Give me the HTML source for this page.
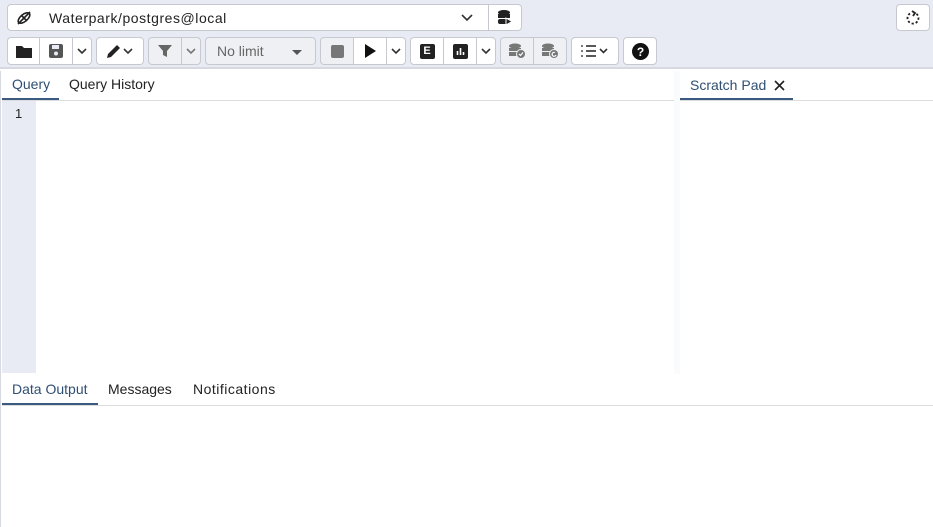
<!DOCTYPE html>
<html><head><style>
*{box-sizing:border-box;margin:0;padding:0}
body{width:933px;height:527px;background:#fff;font-family:"Liberation Sans",sans-serif;font-size:14px;color:#222;position:relative;overflow:hidden}
.top{position:absolute;left:0;top:0;width:933px;height:69px;background:#e8ebf3;border-bottom:2px solid #d6d9e0}
.b{position:absolute;background:#fff;border:1px solid #c6c9d0;display:flex;align-items:center;justify-content:center}
.abs{position:absolute}
.tab{position:absolute;font-size:14px}
</style></head><body>
<div class="top">
<div class="b" style="left:7px;top:4px;width:33px;height:27px;border-radius:4px 0 0 4px">
<svg width="18" height="18" viewBox="0 0 18 18" fill="none" stroke="#222" stroke-width="1.6"><ellipse cx="9" cy="9" rx="7" ry="3.5" transform="rotate(-40 9 9)"/><path d="M4 14l10-10M6 6l6 6M3 15l2-2M13 5l2-2"/></svg></div>
<div class="b" style="left:39px;top:4px;width:450px;height:27px;justify-content:flex-start;padding-left:10px;border-left:none;letter-spacing:0.55px">Waterpark/postgres@local
<svg class="abs" style="left:422px;top:9px" width="12" height="8" viewBox="0 0 12 8"><path d="M1 1l5 5 5-5" stroke="#333" stroke-width="1.6" fill="none"/></svg></div>
<div class="b" style="left:488px;top:4px;width:34px;height:27px;border-radius:0 4px 4px 0">
<svg width="16" height="18" viewBox="0 0 16 18"><ellipse cx="7" cy="3.5" rx="6" ry="2.5" fill="#222"/><rect x="1" y="5" width="12" height="4" fill="#222"/><rect x="1" y="10" width="12" height="5" rx="2" fill="#222"/><path d="M9 9l6 3.5-6 3.5z" fill="#222" stroke="#fff" stroke-width="1"/></svg></div>
<div class="b" style="left:896px;top:4px;width:34px;height:27px;border-radius:4px">
<svg width="16" height="16" viewBox="0 0 16 16" fill="none" stroke="#222" stroke-width="1.8" stroke-dasharray="2.2 2"><path d="M5 3.5A5.5 5.5 0 1 0 10 3"/><path d="M7 1l3 2-2 3" stroke-dasharray="none"/></svg></div>

<div class="b" style="left:7px;top:37px;width:33px;height:28px;border-radius:4px 0 0 4px"><svg width="16" height="14" viewBox="0 0 16 14"><path d="M0 2h6l2 2h8v10H0z" fill="#222"/></svg></div>
<div class="b" style="left:39px;top:37px;width:34px;height:28px"><svg width="14" height="14" viewBox="0 0 14 14"><rect width="14" height="14" rx="2" fill="#555"/><rect x="3" y="1" width="7" height="4" fill="#e8ebf3"/><circle cx="7" cy="9.5" r="2" fill="#e8ebf3"/></svg></div>
<div class="b" style="left:72px;top:37px;width:20px;height:28px;border-radius:0 4px 4px 0"><svg width="10" height="7" viewBox="0 0 10 7"><path d="M1 1l4 4 4-4" stroke="#333" stroke-width="1.6" fill="none"/></svg></div>
<div class="b" style="left:96px;top:37px;width:48px;height:28px;border-radius:4px"><svg width="30" height="16" viewBox="0 0 30 16"><path d="M2 15l1-4 9-9 3 3-9 9z" fill="#222"/><path d="M19 6l4 4 4-4" stroke="#333" stroke-width="1.6" fill="none"/></svg></div>
<div class="b" style="left:148px;top:37px;width:34px;height:28px;border-radius:4px 0 0 4px;background:#eef0f4"><svg width="14" height="14" viewBox="0 0 14 14"><path d="M0 1h14L9 7v6L5 11V7z" fill="#666"/></svg></div>
<div class="b" style="left:181px;top:37px;width:20px;height:28px;border-radius:0 4px 4px 0;background:#eef0f4"><svg width="10" height="7" viewBox="0 0 10 7"><path d="M1 1l4 4 4-4" stroke="#777" stroke-width="1.6" fill="none"/></svg></div>
<div class="b" style="left:205px;top:37px;width:111px;height:28px;border-radius:4px;background:#eef0f4;justify-content:flex-start;padding-left:11px;color:#666">No limit<svg class="abs" style="left:86px;top:12px" width="10" height="5" viewBox="0 0 10 5"><path d="M0 0h10L5 5z" fill="#555"/></svg></div>
<div class="b" style="left:320px;top:37px;width:34px;height:28px;border-radius:4px 0 0 4px;background:#eef0f4"><div style="width:13px;height:13px;background:#777;border-radius:2px"></div></div>
<div class="b" style="left:353px;top:37px;width:34px;height:28px"><svg width="12" height="14" viewBox="0 0 12 14"><path d="M1 0l11 7-11 7z" fill="#111"/></svg></div>
<div class="b" style="left:386px;top:37px;width:20px;height:28px;border-radius:0 4px 4px 0"><svg width="10" height="7" viewBox="0 0 10 7"><path d="M1 1l4 4 4-4" stroke="#333" stroke-width="1.6" fill="none"/></svg></div>
<div class="b" style="left:410px;top:37px;width:34px;height:28px;border-radius:4px 0 0 4px"><div style="width:15px;height:15px;background:#222;border-radius:2px;color:#fff;font-size:11px;font-weight:bold;text-align:center;line-height:15px">E</div></div>
<div class="b" style="left:443px;top:37px;width:34px;height:28px"><svg width="15" height="15" viewBox="0 0 15 15"><rect width="15" height="15" rx="2" fill="#222"/><path d="M4.5 11V7M7.5 11V4M10.5 11V8" stroke="#fff" stroke-width="1.6"/></svg></div>
<div class="b" style="left:476px;top:37px;width:20px;height:28px;border-radius:0 4px 4px 0"><svg width="10" height="7" viewBox="0 0 10 7"><path d="M1 1l4 4 4-4" stroke="#333" stroke-width="1.6" fill="none"/></svg></div>
<div class="b" style="left:500px;top:37px;width:34px;height:28px;border-radius:4px 0 0 4px;background:#eef0f4"><svg width="18" height="16" viewBox="0 0 18 16"><ellipse cx="7" cy="3" rx="6" ry="2.5" fill="#777"/><rect x="1" y="5" width="12" height="3" fill="#777"/><rect x="1" y="9" width="9" height="4" fill="#777"/><circle cx="13" cy="11" r="4.5" fill="#777" stroke="#eef0f4"/><path d="M11 11l1.5 1.5 2.5-3" stroke="#fff" stroke-width="1.2" fill="none"/></svg></div>
<div class="b" style="left:533px;top:37px;width:34px;height:28px;border-radius:0 4px 4px 0;background:#eef0f4"><svg width="18" height="16" viewBox="0 0 18 16"><ellipse cx="7" cy="3" rx="6" ry="2.5" fill="#777"/><rect x="1" y="5" width="12" height="3" fill="#777"/><rect x="1" y="9" width="9" height="4" fill="#777"/><circle cx="13" cy="11" r="4.5" fill="#777" stroke="#eef0f4"/><path d="M15 12a2 2 0 1 1-1-2.5" stroke="#fff" stroke-width="1.2" fill="none"/></svg></div>
<div class="b" style="left:571px;top:37px;width:48px;height:28px;border-radius:4px"><svg width="28" height="14" viewBox="0 0 28 14"><path d="M5 2h10M5 7h10M5 12h10" stroke="#222" stroke-width="1.6"/><path d="M1 1v2M1 6v2M1 11v2" stroke="#222" stroke-width="1.2"/><path d="M19 5l3.5 3.5L26 5" stroke="#333" stroke-width="1.6" fill="none"/></svg></div>
<div class="b" style="left:623px;top:37px;width:34px;height:28px;border-radius:4px"><svg width="17" height="17" viewBox="0 0 17 17"><circle cx="8.5" cy="8.5" r="8.5" fill="#111"/><text x="8.5" y="13" font-size="12" font-weight="bold" fill="#fff" text-anchor="middle" font-family="Liberation Sans">?</text></svg></div>
</div>

<div class="abs" style="left:0;top:71px;width:1px;height:456px;background:#d6d9e0"></div>
<div class="tab" style="left:12px;top:76px;color:#2f4f74">Query</div>
<div class="tab" style="left:69px;top:76px">Query History</div>
<div class="abs" style="left:2px;top:98px;width:57px;height:2px;background:#3a5a80"></div>
<div class="abs" style="left:2px;top:100px;width:672px;height:1px;background:#dcdde0"></div>
<div class="abs" style="left:2px;top:101px;width:34px;height:272px;background:#e8ebf3"></div>
<div class="abs" style="left:15px;top:106px;font-size:13px">1</div>
<div class="abs" style="left:674px;top:71px;width:6px;height:303px;background:#fafbfd"></div>
<div class="tab" style="left:690px;top:77px;color:#2f4f74">Scratch Pad</div>
<svg class="abs" style="left:774px;top:80px" width="11" height="11" viewBox="0 0 11 11"><path d="M1 1l9 9M10 1l-9 9" stroke="#222" stroke-width="1.6"/></svg>
<div class="abs" style="left:680px;top:98px;width:113px;height:2px;background:#3a5a80"></div>
<div class="abs" style="left:680px;top:100px;width:253px;height:1px;background:#dcdde0"></div>

<div class="tab" style="left:12px;top:381px;color:#2f4f74">Data Output</div>
<div class="tab" style="left:108px;top:381px">Messages</div>
<div class="tab" style="left:193px;top:381px;letter-spacing:0.5px">Notifications</div>
<div class="abs" style="left:2px;top:403px;width:96px;height:2px;background:#3a5a80"></div>
<div class="abs" style="left:2px;top:405px;width:931px;height:1px;background:#dcdde0"></div>
</body></html>
